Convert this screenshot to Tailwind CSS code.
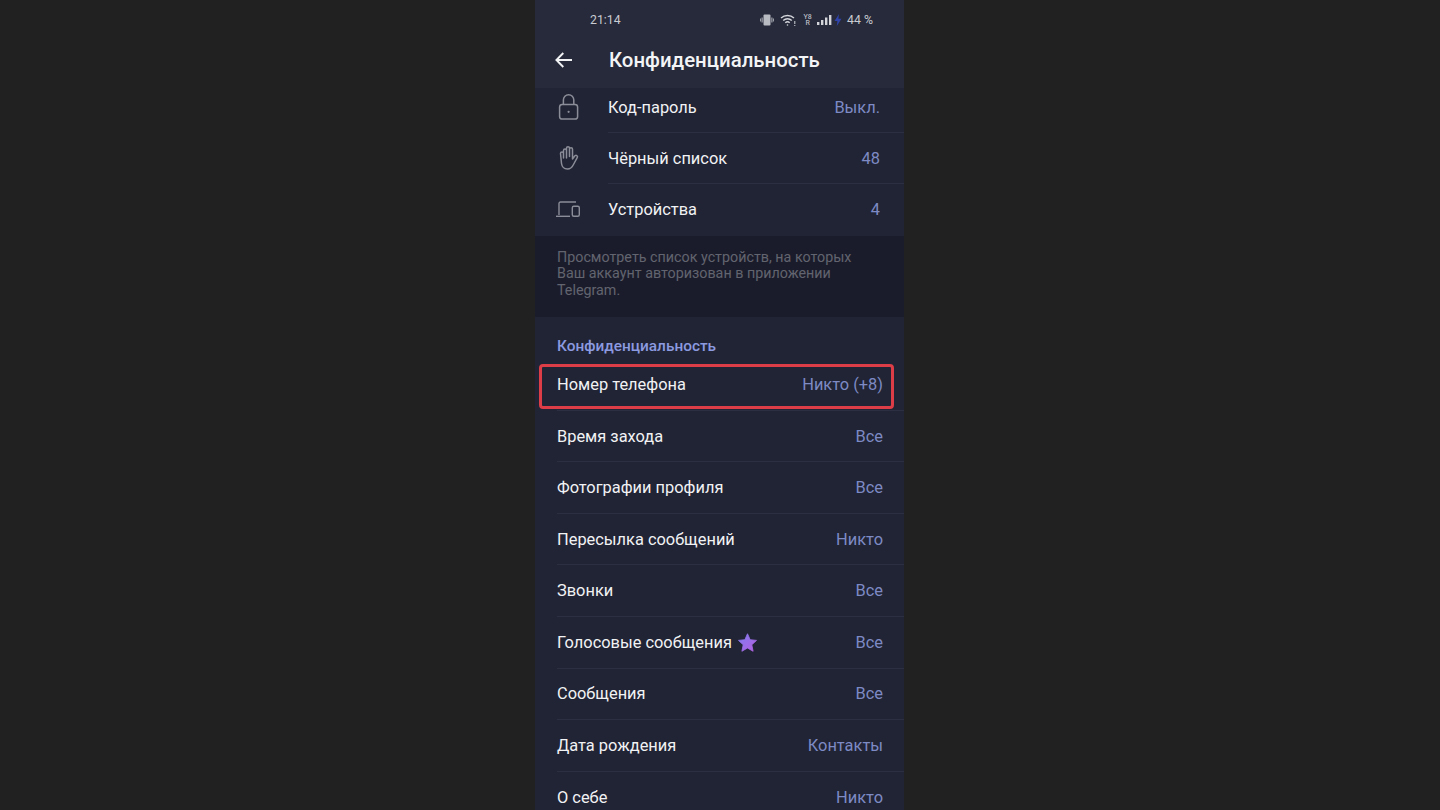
<!DOCTYPE html>
<html lang="ru">
<head>
  <meta charset="UTF-8">
  <meta name="viewport" content="width=device-width, initial-scale=1.0">
  <title>Конфиденциальность</title>
  <script src="https://cdn.jsdelivr.net/npm/@tailwindcss/browser@4"></script>
</head>
<body class="bg-[#212121] font-['Roboto',sans-serif]">
  <div class="flex h-[810px] overflow-hidden pl-[535px]">
    <div class="w-[369px] h-[810px] flex flex-col bg-[#212434] overflow-hidden">

      <!-- Status bar + toolbar -->
      <header class="relative z-10 h-[88px] shrink-0 bg-[#262a3a]">
        <div class="flex items-center h-[40px] pl-[55px] pr-[31px] text-[12.3px] text-[#c9cbd2]">
          <span>21:14</span>
          <div class="ml-auto flex items-center">
            <svg class="w-[14px] h-[14px] mr-[6px]" viewBox="0 0 14 14" fill="#b9bbc3"><rect x="3.5" y="1.5" width="7" height="11" rx="1"/><rect x="1.6" y="4.5" width="1" height="5"/><rect x="11.4" y="4.5" width="1" height="5"/><rect y="5.5" width="0.8" height="3"/><rect x="13.2" y="5.5" width="0.8" height="3"/></svg>
            <svg class="w-[16px] h-[14px] mr-[7px]" viewBox="0 0 16 14" fill="none" stroke="#d3d5db" stroke-width="1.4"><path d="M1 5a9.5 9.5 0 0 1 13 0"/><path d="M3.2 7.4a6.3 6.3 0 0 1 8.6 0"/><path d="M5.3 9.7a3.2 3.2 0 0 1 4.4 0"/><circle cx="7.5" cy="12" r="0.8" fill="#d3d5db" stroke="none"/><path d="M14.8 8v3M14.8 12v1" stroke-width="1"/></svg>
            <span class="text-[7px] leading-[6px] w-[9px] mr-[5px] text-[#b9bbc3] font-medium text-center">Y8<br>R</span>
            <svg class="w-[15px] h-[10px] mr-[2px]" viewBox="0 0 15 10" fill="#d3d5db"><rect x="0" y="7" width="2.4" height="3"/><rect x="4" y="5" width="2.4" height="5"/><rect x="8" y="2.5" width="2.4" height="7.5"/><rect x="12" y="0" width="2.4" height="10"/></svg>
            <svg class="w-[8px] h-[12px] mr-[5px]" viewBox="0 0 8 12" fill="#2f43a8"><path d="M5 0 0.5 7H3.4L2.8 12 7.500 4.800H4.400Z"/></svg>
            <span>44 %</span>
          </div>
        </div>
        <div class="flex items-center h-[40px] pl-[20px]">
          <svg class="w-[17px] h-[16px]" viewBox="0 0 17 16" fill="none" stroke="#f2f3f5" stroke-width="1.9"><path d="M17 8H1.500M8.300 1 1.400 8l6.900 7"/></svg>
          <h1 class="ml-[37px] text-[20.4px] font-medium text-[#f3f4f6]">Конфиденциальность</h1>
        </div>
      </header>

      <!-- Security rows, scrolled under the toolbar -->
      <section class="-mt-[6px]">
        <div class="flex items-center h-[51px] pl-[20px]">
          <svg class="w-[26px] h-[28px] -mt-[1px] shrink-0" viewBox="0 0 26 28" fill="none" stroke="#8b8d98" stroke-width="1.5"><rect x="4.600" y="11.500" width="18" height="14.500" rx="2.600"/><path d="M8.400 11.500V7a5.200 5.200 0 0 1 10.400 0v4.500"/><circle cx="13.600" cy="18.800" r="1.100" fill="#8b8d98" stroke="none"/></svg>
          <div class="flex flex-1 items-center justify-between h-full ml-[27px] pr-[24px] pt-[2px] border-b border-[#2c2e41]">
            <span class="text-[16.4px] text-[#f1f2f4]">Код-пароль</span>
            <span class="text-[16.4px] text-[#7d8ac4]">Выкл.</span>
          </div>
        </div>
        <div class="flex items-center h-[51px] pl-[20px]">
          <svg class="w-[26px] h-[28px] -mt-[1px] shrink-0" viewBox="0 0 26 28" fill="none" stroke="#8b8d98" stroke-width="1.5" stroke-linecap="round" stroke-linejoin="round"><path d="M8.500 14V6.500a1.500 1.500 0 0 1 3 0V14M11.500 12V4.200a1.500 1.500 0 0 1 3 0V12M14.500 12.500V5.200a1.500 1.500 0 0 1 3 0V15M17.500 15l2.200-3a1.500 1.500 0 0 1 2.500 1.700l-4 7.300c-1 2-2.600 4-5.700 4-3.700 0-5.500-2.200-6-5.500L5.500 9.500a1.500 1.500 0 0 1 3 0"/></svg>
          <div class="flex flex-1 items-center justify-between h-full ml-[27px] pr-[24px] pt-[2px] border-b border-[#2c2e41]">
            <span class="text-[16.4px] text-[#f1f2f4]">Чёрный список</span>
            <span class="text-[16.4px] text-[#7d8ac4]">48</span>
          </div>
        </div>
        <div class="flex items-center h-[52px] pl-[20px]">
          <svg class="w-[26px] h-[18px] shrink-0" viewBox="0 0 26 18" fill="none" stroke="#8b8d98" stroke-width="1.4"><path d="M4 14V2.500a1.500 1.500 0 0 1 1.500-1.500H21"/><path d="M1 15.300H15"/><rect x="17.300" y="5.300" width="7" height="10" rx="1.500"/></svg>
          <div class="flex flex-1 items-center justify-between h-full ml-[27px] pr-[24px]">
            <span class="text-[16.4px] text-[#f1f2f4]">Устройства</span>
            <span class="text-[16.4px] text-[#7d8ac4]">4</span>
          </div>
        </div>
      </section>

      <!-- Hint -->
      <p class="h-[81px] shrink-0 bg-[#1b1c2b] pt-[12.500px] pl-[22px] pr-[40px] text-[14.3px] leading-[16.700px] text-[#62646f]">Просмотреть список устройств, на которых Ваш аккаунт авторизован в приложении Telegram.</p>

      <!-- Privacy rows -->
      <section>
        <h2 class="h-[42px] pt-[19px] pl-[22px] text-[15.4px] leading-[20px] font-medium text-[#8c9ae0]">Конфиденциальность</h2>

        <div class="relative flex items-center justify-between h-[51.600px] ml-[22px] pr-[21px] pt-[2px] border-b border-[#2c2e41]">
          <span class="text-[16.4px] text-[#f1f2f4]">Номер телефона</span>
          <span class="text-[16.4px] text-[#7d8ac4]">Никто (+8)</span>
          <div class="absolute left-[-18px] top-[5px] w-[355px] h-[45px] border-[3px] border-[#dc3d47] rounded-[4px]"></div>
        </div>
        <div class="flex items-center justify-between h-[51.600px] ml-[22px] pr-[21px] pt-[2px] border-b border-[#2c2e41]">
          <span class="text-[16.4px] text-[#f1f2f4]">Время захода</span>
          <span class="text-[16.4px] text-[#7d8ac4]">Все</span>
        </div>
        <div class="flex items-center justify-between h-[51.600px] ml-[22px] pr-[21px] pt-[2px] border-b border-[#2c2e41]">
          <span class="text-[16.4px] text-[#f1f2f4]">Фотографии профиля</span>
          <span class="text-[16.4px] text-[#7d8ac4]">Все</span>
        </div>
        <div class="flex items-center justify-between h-[51.600px] ml-[22px] pr-[21px] pt-[2px] border-b border-[#2c2e41]">
          <span class="text-[16.4px] text-[#f1f2f4]">Пересылка сообщений</span>
          <span class="text-[16.4px] text-[#7d8ac4]">Никто</span>
        </div>
        <div class="flex items-center justify-between h-[51.600px] ml-[22px] pr-[21px] pt-[2px] border-b border-[#2c2e41]">
          <span class="text-[16.4px] text-[#f1f2f4]">Звонки</span>
          <span class="text-[16.4px] text-[#7d8ac4]">Все</span>
        </div>
        <div class="flex items-center h-[51.600px] ml-[22px] pr-[21px] pt-[2px] border-b border-[#2c2e41]">
          <span class="text-[16.4px] text-[#f1f2f4]">Голосовые сообщения</span>
          <svg class="w-[21px] h-[21px] ml-[5px] -mt-[1px]" viewBox="0 0 24 24"><defs><linearGradient id="star" x1="0" y1="0" x2="1" y2="1"><stop offset="0" stop-color="#7f7cf0"/><stop offset="1" stop-color="#b45fe0"/></linearGradient></defs><path fill="url(#star)" stroke="url(#star)" stroke-width="1" stroke-linejoin="round" d="M12 2l3 6.800 7.300.8-5.400 5 1.500 7.400-6.400-3.700-6.400 3.700 1.500-7.400-5.400-5 7.300-.8z"/></svg>
          <span class="ml-auto text-[16.4px] text-[#7d8ac4]">Все</span>
        </div>
        <div class="flex items-center justify-between h-[51.600px] ml-[22px] pr-[21px] pt-[1px] border-b border-[#2c2e41]">
          <span class="text-[16.4px] text-[#f1f2f4]">Сообщения</span>
          <span class="text-[16.4px] text-[#7d8ac4]">Все</span>
        </div>
        <div class="flex items-center justify-between h-[51.600px] ml-[22px] pr-[21px] pt-[2px] border-b border-[#2c2e41]">
          <span class="text-[16.4px] text-[#f1f2f4]">Дата рождения</span>
          <span class="text-[16.4px] text-[#7d8ac4]">Контакты</span>
        </div>
        <div class="flex items-center justify-between h-[51.600px] ml-[22px] pr-[21px] pt-[2px]">
          <span class="text-[16.4px] text-[#f1f2f4]">О себе</span>
          <span class="text-[16.4px] text-[#7d8ac4]">Никто</span>
        </div>
      </section>
    </div>
  </div>
</body>
</html>
